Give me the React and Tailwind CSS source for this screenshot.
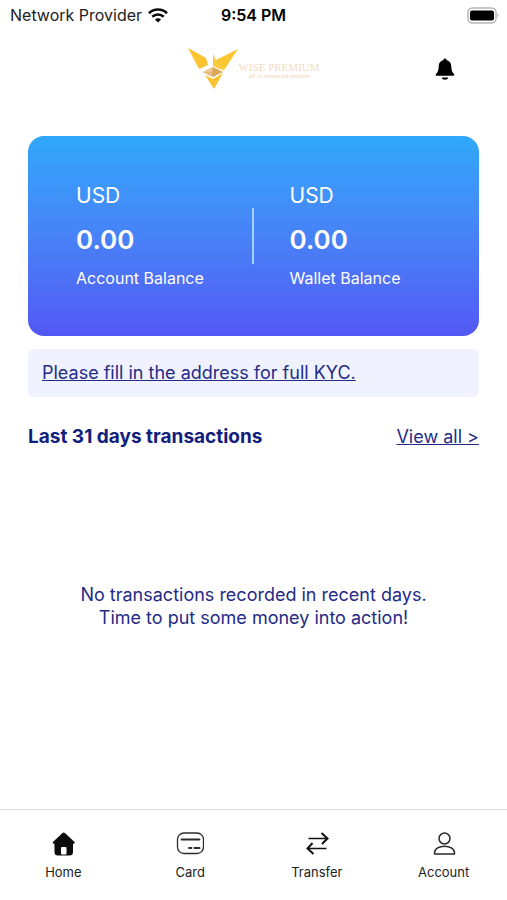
const balances = [
  { label: "Account Balance", currency: "USD", amount: "0.00" },
  { label: "Wallet Balance", currency: "USD", amount: "0.00" },
];

const tabs = [
  { label: "Home", icon: HomeIcon },
  { label: "Card", icon: CardIcon },
  { label: "Transfer", icon: TransferIcon },
  { label: "Account", icon: AccountIcon },
];

function WifiIcon() {
  return (
    <svg width="20" height="15" viewBox="0 0 20 15" aria-hidden="true">
      <g fill="none" stroke="#0a0a0a" strokeWidth="2.6">
        <path d="M1 5.2C6 .3 14 .3 19 5.2" />
        <path d="M4.3 8.7c3.2-3 8.2-3 11.4 0" />
      </g>
      <path d="M10 14.6 6.9 11.4c1.7-1.6 4.500-1.600 6.200 0z" fill="#0a0a0a" />
    </svg>
  );
}

function BatteryIcon() {
  return (
    <svg width="33" height="17" viewBox="0 0 33 17" aria-hidden="true">
      <rect x="2" y="1" width="28" height="15" rx="4.5" fill="white" stroke="#b5b5b5" strokeWidth="1.5" />
      <rect x="4" y="3.500" width="24" height="10" rx="2" fill="black" />
      <path d="M31.500 6.500c1.500.5 1.500 3.500 0 4z" fill="#b5b5b5" />
    </svg>
  );
}

function BellIcon() {
  return (
    <svg width="20" height="23" viewBox="0 0 20 23" aria-hidden="true">
      <path
        d="M10 .5c.9 0 1.500.6 1.600 1.500 3 .8 4.700 3.200 4.700 6.300 0 4.300 1 6 2.700 7.700.5.500.5 1.800-.6 1.800H1.600c-1.100 0-1.100-1.300-.6-1.800 1.700-1.700 2.700-3.400 2.700-7.700 0-3.100 1.700-5.500 4.700-6.300C8.500 1.100 9.100.5 10 .5z"
        fill="black"
      />
      <path d="M6.800 19.500h6.400c-.3 3-6.100 3-6.400 0z" fill="black" />
    </svg>
  );
}

function Logo() {
  return (
    <div className="flex items-center">
      <svg width="51" height="42" viewBox="0 0 51 42" aria-hidden="true">
        <path d="M0 0 18 10 20 17 11 21z" fill="#fcc42f" />
        <path d="M50 1 28 12 29 15 36 22z" fill="#f9c730" />
        <path d="M25 6 28 12 36 23 25 18z" fill="#fac93c" />
        <path d="M15 24 25 19 35 24 25 29z" fill="#d9a65c" />
        <path d="M15 24 25 19 24 24z" fill="#ecc894" />
        <path d="M15 24 24 24 25 29z" fill="#e6bb80" />
        <path d="M17 27 25 31 35 25 26 41z" fill="#f8c22c" />
      </svg>
      <div className="pt-0.5 text-center font-['Liberation_Serif',serif]">
        <p className="text-[11px] leading-3 text-[#f3dcc2]">WISE PREMIUM</p>
        <p className="text-[6px] leading-[6px] italic text-[#ecd0ae]">all v2 connected solution</p>
      </div>
    </div>
  );
}

function HomeIcon() {
  return (
    <svg width="28" height="28" viewBox="0 0 28 28" aria-hidden="true">
      <path
        d="M13.500 3a2 2 0 0 1 2.400 0l9.400 8.800c.8.8.4 2-.6 2H24V22a3.500 3.500 0 0 1-3.500 3.500H9A3.500 3.500 0 0 1 5.500 22v-8.200h-.7c-1 0-1.400-1.200-.6-2z"
        fill="#0c0c0c"
      />
      <rect x="12" y="17" width="5.500" height="7.500" rx=".8" fill="white" />
    </svg>
  );
}

function CardIcon() {
  return (
    <svg width="28" height="28" viewBox="0 0 28 28" fill="none" stroke="#2b2b2b" aria-hidden="true">
      <rect x="1.500" y="3" width="26" height="20.500" rx="6.500" strokeWidth="1.300" />
      <path d="M5.500 9.500h18M13 18h2.500M18.500 18h5" strokeWidth="1.800" strokeLinecap="round" />
    </svg>
  );
}

function TransferIcon() {
  return (
    <svg width="28" height="28" viewBox="0 0 28 28" fill="none" stroke="#111" aria-hidden="true">
      <path d="M5.500 8.500h19M23.500 18.500h-19" strokeWidth="1.400" />
      <path d="M18.500 3 24.500 8.500l-5.500 5.500M9.500 13 4.500 18.500l6 5.500" strokeWidth="2" />
    </svg>
  );
}

function AccountIcon() {
  return (
    <svg width="28" height="28" viewBox="0 0 28 28" fill="none" stroke="#2b2b2b" strokeWidth="1.500" aria-hidden="true">
      <circle cx="14.500" cy="8.500" r="5.500" />
      <path d="M4.500 24v-1c0-9 20-9 20 0v1z" strokeLinejoin="round" />
    </svg>
  );
}

function Balance({ currency, amount, label }) {
  return (
    <div>
      <p className="text-[21px] leading-8">{currency}</p>
      <p className="mt-2 text-[26px] leading-10 font-semibold">{amount}</p>
      <p className="mt-1 text-base leading-7">{label}</p>
    </div>
  );
}

export default function App() {
  return (
    <div className="flex min-h-screen flex-col bg-white font-[Inter,sans-serif] text-[#242b86]">
      <div className="grid grid-cols-3 items-center px-2 pt-[5px] text-[#222]">
        <div className="flex items-center gap-1.5 pl-0.5 text-base leading-5 whitespace-nowrap">
          <span>Network Provider</span>
          <WifiIcon />
        </div>
        <p className="text-center text-base leading-5 font-semibold text-black">9:54 PM</p>
        <div className="flex justify-end">
          <BatteryIcon />
        </div>
      </div>

      <header className="mt-[23px] grid grid-cols-[1fr_auto_1fr] items-center px-7">
        <div />
        <Logo />
        <button type="button" aria-label="Notifications" className="justify-self-end px-6">
          <BellIcon />
        </button>
      </header>

      <main className="flex-1 px-7 pt-[46px]">
        <section className="grid grid-cols-2 items-center rounded-2xl bg-linear-to-b from-[#2fa8fa] to-[#5357f3] py-11 text-white">
          <div className="flex items-center justify-between pl-12">
            <Balance {...balances[0]} />
            <div className="h-14 w-0.5 bg-[#a3d2fd]" />
          </div>
          <div className="pl-9">
            <Balance {...balances[1]} />
          </div>
        </section>

        <div className="mt-[13px] rounded-md bg-[#f0f3ff] px-3.5 py-3">
          <a href="#kyc" className="block text-lg leading-6 underline">
            Please fill in the address for full KYC.
          </a>
        </div>

        <div className="mt-7 flex items-center justify-between leading-6">
          <h2 className="text-[19px] font-bold text-[#11207c]">Last 31 days transactions</h2>
          <a href="#transactions" className="text-lg leading-6 underline">
            View all &gt;
          </a>
        </div>

        <p className="py-[134px] text-center text-lg leading-[23px]">
          No transactions recorded in recent days.
          <br />
          Time to put some money into action!
        </p>
      </main>

      <nav className="grid grid-cols-4 border-t border-[#dcdcea] pt-5 pb-[18px]">
        {tabs.map(({ label, icon: Icon }) => (
          <a
            key={label}
            href={`#${label.toLowerCase()}`}
            className="flex flex-col items-center gap-1 text-[13px] leading-5 text-[#222]"
          >
            <Icon />
            {label}
          </a>
        ))}
      </nav>
    </div>
  );
}
